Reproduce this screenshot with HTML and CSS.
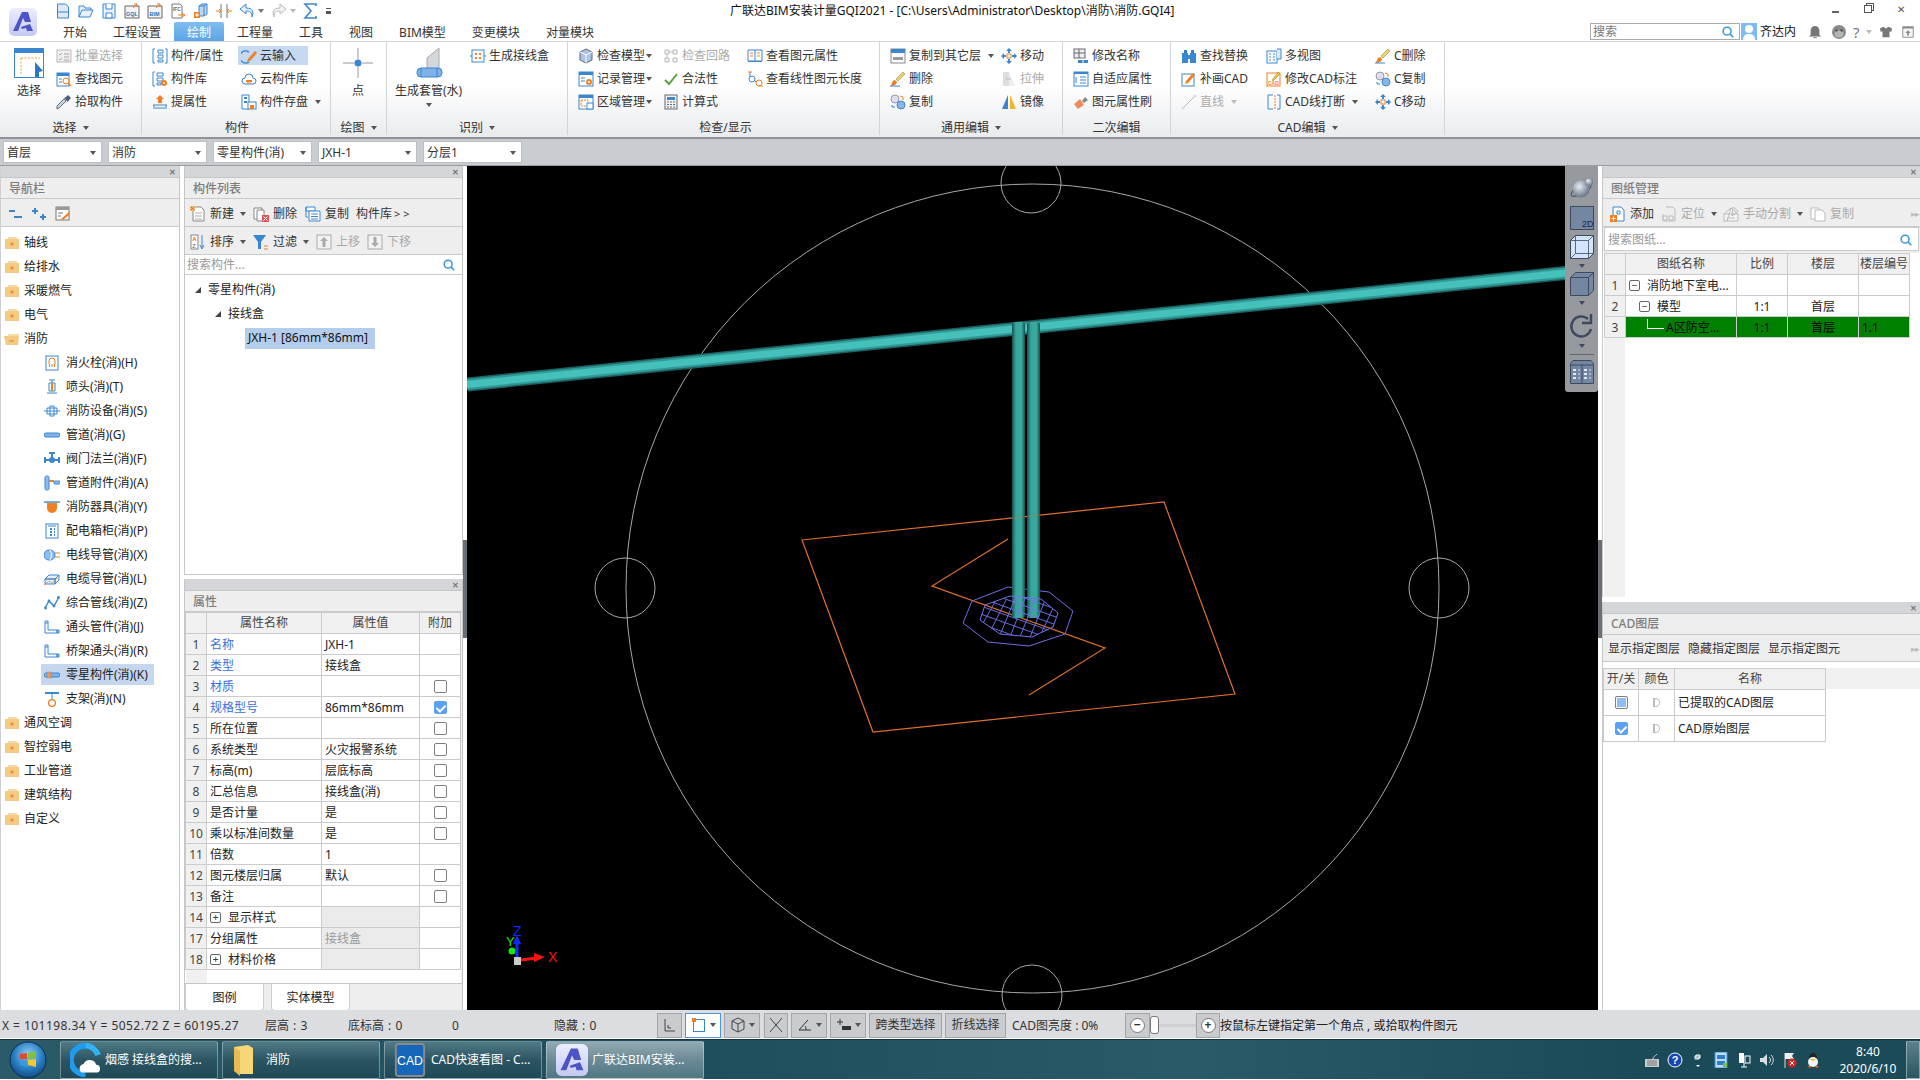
FILE: index.html
```html
<!DOCTYPE html>
<html lang="zh-CN">
<head>
<meta charset="utf-8">
<title>广联达BIM安装计量GQI2021</title>
<link rel="stylesheet" href="styles.css">
</head>
<body>
<svg class="defs" width="0" height="0">
  <defs>
    <linearGradient id="gv" x1="0" x2="1" y1="0" y2="0"><stop offset="0" stop-color="#144f4d"/><stop offset=".3" stop-color="#38a59d"/><stop offset=".72" stop-color="#3aa99f"/><stop offset="1" stop-color="#144f4d"/></linearGradient>
    <linearGradient id="lg" x1="0" x2="0" y1="0" y2="1"><stop offset="0" stop-color="#eceeff"/><stop offset="1" stop-color="#c5c9f2"/></linearGradient>
    <radialGradient id="orb" cx=".5" cy=".35" r=".7"><stop offset="0" stop-color="#8fd0f5"/><stop offset=".55" stop-color="#2a7fc4"/><stop offset="1" stop-color="#0d3f74"/></radialGradient>
    <radialGradient id="sph" cx=".4" cy=".35" r=".7"><stop offset="0" stop-color="#e8edf3"/><stop offset="1" stop-color="#5d6b7c"/></radialGradient>
    <clipPath id="gridclip"><polygon points="1010,596 1041,599 1058,613 1053,627 1032,637 1000,634 980,620 985,605"/></clipPath>

    <symbol id="logo" viewBox="0 0 28 28"><rect width="28" height="28" rx="5" fill="url(#lg)"/><path d="M4 23 13 4h6l3 10h-6l-2-4-5 13zM12 19l9-3 3 7h-6l-1-3-4 1z" fill="#4c54c6"/></symbol>

    <symbol id="q-new" viewBox="0 0 16 16"><path d="M2.5 1h8l3 3v11h-11z" fill="#dbe9f8" stroke="#3a86d0"/><path d="M3 9h10" stroke="#3a86d0"/></symbol>
    <symbol id="q-open" viewBox="0 0 16 16"><path d="M1 14V3h5l1 2h6v2M1 14l3-7h11l-3 7z" fill="#e8f1fb" stroke="#3a86d0"/></symbol>
    <symbol id="q-save" viewBox="0 0 16 16"><path d="M2 1h12v14H2z" fill="#eaf3fc" stroke="#3a86d0"/><path d="M5 1v5h6V1M5 10h6v5H5z" fill="#fff" stroke="#3a86d0"/></symbol>
    <symbol id="q-gql" viewBox="0 0 16 16"><path d="M1 3h14v12H1z" fill="#f4f4f4" stroke="#666"/><path d="M9 5l4-4M13 1h-3M13 1v3" stroke="#f07f22" fill="none"/><text x="2" y="13" font-size="5.4" font-family="Liberation Sans" font-weight="700" fill="#2d6fb5">GQL</text></symbol>
    <symbol id="q-bim" viewBox="0 0 16 16"><path d="M1 3h14v12H1z" fill="#f4f4f4" stroke="#666"/><path d="M9 5l4-4M13 1h-3M13 1v3" stroke="#f07f22" fill="none"/><text x="2.5" y="13" font-size="5.4" font-family="Liberation Sans" font-weight="700" fill="#2d6fb5">BIM</text></symbol>
    <symbol id="q-ifc" viewBox="0 0 16 16"><path d="M2 1h8l2 2v12H2z" fill="#fff" stroke="#777"/><text x="3" y="8" font-size="4.8" font-family="Liberation Sans" font-weight="700" fill="#666">IFC</text><path d="M8 12h6M12 10l3 2-3 2" stroke="#f07f22" fill="none"/></symbol>
    <symbol id="q-box" viewBox="0 0 16 16"><path d="M6 3l3-2h5v10l-3 2H6z" fill="#bcd8f2" stroke="#3a86d0"/><path d="M6 3h5v10M11 3l3-2" stroke="#3a86d0" fill="none"/><rect x="1" y="9" width="6" height="6" fill="#f07f22"/><path d="M4 10v4M2 12h4" stroke="#fff"/></symbol>
    <symbol id="q-split" viewBox="0 0 16 16"><path d="M5 1v14M11 1v14" stroke="#777"/><path d="M0 8h4M3 6l2 2-2 2M16 8h-4M13 6l-2 2 2 2" stroke="#f07f22" fill="none"/></symbol>
    <symbol id="q-undo" viewBox="0 0 16 16"><path d="M7 1 1 6l6 5V8c4 0 6 1 6 6 2-5 1-9-6-9z" fill="#e3effa" stroke="#3a86d0"/></symbol>
    <symbol id="q-redo" viewBox="0 0 16 16"><path d="M9 1l6 5-6 5V8c-4 0-6 1-6 6-2-5-1-9 6-9z" fill="#f3f3f3" stroke="#bbb"/></symbol>
    <symbol id="q-sum" viewBox="0 0 16 16"><path d="M13 3V1H2l6 7-6 7h11v-2" fill="none" stroke="#3a86d0" stroke-width="1.6"/></symbol>

    <symbol id="i-batch" viewBox="0 0 16 16"><rect x="1" y="2" width="14" height="12" fill="#eee" stroke="#bbb"/><path d="M3 6l1 1 2-2M3 11l1 1 2-2M8 6h5M8 9h5M8 12h5" stroke="#aaa" fill="none"/></symbol>
    <symbol id="i-find" viewBox="0 0 16 16"><rect x="1" y="2" width="12" height="13" fill="#fff" stroke="#3a86d0"/><path d="M1 2h12v3H1z" fill="#3a86d0"/><circle cx="10" cy="10" r="3" fill="#fff" stroke="#f07f22"/><path d="M12 12l3 3" stroke="#f07f22" stroke-width="1.5"/><path d="M3 8h3M3 11h3" stroke="#3a86d0"/></symbol>
    <symbol id="i-pick" viewBox="0 0 16 16"><path d="M1 15l2-1 7-7-2-2-7 7z" fill="#d0d8e0" stroke="#5a6a80"/><path d="M8 4l4 4 1-2 2-2-3-3-2 2z" fill="#4a5c74"/></symbol>
    <symbol id="i-comp" viewBox="0 0 16 16"><path d="M3 1H1v14h2M13 1h2v14h-2" fill="none" stroke="#3a86d0"/><path d="M6 2h5v3H6zM6 7h5v3H6zM6 12h5v2H6z" fill="#fff" stroke="#3a86d0"/></symbol>
    <symbol id="i-lib" viewBox="0 0 16 16"><path d="M3 1H1v14h2" fill="none" stroke="#3a86d0"/><path d="M5 2h6v3H5zM5 7h6v3H5zM5 12h4v2H5z" fill="#fff" stroke="#3a86d0"/><circle cx="12" cy="12" r="3" fill="#f07f22"/><circle cx="12" cy="12" r="1" fill="#fff"/></symbol>
    <symbol id="i-ext" viewBox="0 0 16 16"><path d="M8 1l4 4h-2v4H6V5H4z" fill="#f07f22"/><path d="M1 11h14M3 14h10M2 11v4M14 11v4" stroke="#3a86d0"/></symbol>
    <symbol id="i-cloudin" viewBox="0 0 16 16"><path d="M8 4a6 6 0 1 0 0 10" fill="none" stroke="#3a86d0" stroke-width="1.5"/><path d="M14 3 7 11l-1 3 3-1 7-8z" fill="#f07f22"/></symbol>
    <symbol id="i-cloudlib" viewBox="0 0 16 16"><path d="M4 13a3 3 0 0 1 0-6 4 4 0 0 1 8 0 3 3 0 0 1 0 6z" fill="#fff" stroke="#3a86d0"/><path d="M5 9h6v2H5z" fill="#f07f22"/><path d="M6 12h4" stroke="#f07f22"/></symbol>
    <symbol id="i-store" viewBox="0 0 16 16"><path d="M1 1h7v14H1z" fill="#fff" stroke="#3a86d0"/><path d="M3 3h3v2H3zM3 7h3v2H3z" fill="#3a86d0"/><rect x="7" y="8" width="8" height="7" fill="#fff" stroke="#3a86d0"/><rect x="9" y="11" width="4" height="4" fill="#f07f22"/></symbol>
    <symbol id="i-genbox" viewBox="0 0 16 16"><rect x="2" y="2" width="12" height="12" fill="#fff" stroke="#3a86d0"/><path d="M0 8h2M14 8h2" stroke="#3a86d0"/><path d="M5 5h2v2H5zM9 5h2v2H9zM5 9h2v2H5zM9 9h2v2H9z" fill="#f07f22"/></symbol>
    <symbol id="i-model" viewBox="0 0 16 16"><path d="M8 1l6 3v8l-6 3-6-3V4z" fill="#a9c6e6" stroke="#667"/><path d="M2 4l6 3 6-3M8 7v8" stroke="#fff" fill="none"/></symbol>
    <symbol id="i-record" viewBox="0 0 16 16"><rect x="1" y="1" width="14" height="14" fill="#fff" stroke="#3a86d0"/><path d="M1 1h14v3H1z" fill="#3a86d0"/><path d="M3 7h4M3 10h4" stroke="#3a86d0"/><circle cx="11" cy="11" r="3" fill="#f07f22"/><circle cx="11" cy="11" r="1" fill="#fff"/></symbol>
    <symbol id="i-area" viewBox="0 0 16 16"><rect x="1" y="1" width="14" height="14" fill="#fff" stroke="#3a86d0"/><path d="M1 1h14v3H1z" fill="#3a86d0"/><rect x="3" y="6" width="7" height="6" fill="none" stroke="#f07f22" stroke-dasharray="2 1"/><path d="M9 9h6v6H9z" fill="#fff" stroke="#3a86d0"/></symbol>
    <symbol id="i-loop" viewBox="0 0 16 16"><path d="M2 2h4v4H2zM10 2h4v4h-4zM2 10h4v4H2zM10 10h4v4h-4zM6 4h4M4 6v4" fill="#f2f2f2" stroke="#bbb"/></symbol>
    <symbol id="i-legal" viewBox="0 0 16 16"><path d="M2 9l4 4 8-10" fill="none" stroke="#5aa13c" stroke-width="2"/></symbol>
    <symbol id="i-calc" viewBox="0 0 16 16"><rect x="2" y="1" width="12" height="14" fill="#f4f4f4" stroke="#667"/><path d="M4 3h8v3H4z" fill="#3a86d0"/><path d="M4 8h2M7 8h2M10 8h2M4 10.5h2M7 10.5h2M10 10.5h2M4 13h2M7 13h2M10 13h2" stroke="#667"/></symbol>
    <symbol id="i-attr" viewBox="0 0 16 16"><path d="M1 2h14v11H1z" fill="#fff" stroke="#3a86d0"/><path d="M8 2v11" stroke="#3a86d0"/><path d="M3 5h3M3 8h3M10 5h3M10 8h3" stroke="#f07f22"/><path d="M1 13h14v1H1z" fill="#3a86d0"/></symbol>
    <symbol id="i-len" viewBox="0 0 16 16"><path d="M3 1v5M3 6l9 7" stroke="#3a86d0"/><circle cx="5" cy="8" r="3" fill="#fff" stroke="#3a86d0"/><circle cx="12" cy="12" r="3" fill="#fff" stroke="#f07f22"/><path d="M1 1h4M12 15h4" stroke="#f07f22"/></symbol>
    <symbol id="i-copyto" viewBox="0 0 16 16"><rect x="1" y="1" width="14" height="14" fill="#fff" stroke="#888"/><path d="M1 1h14v4H1z" fill="#3a86d0"/><path d="M3 9h10v3H3z" fill="#999"/></symbol>
    <symbol id="i-move" viewBox="0 0 16 16"><path d="M8 0l3 3H9v2H7V3H5zM8 16l-3-3h2v-2h2v2h2zM0 8l3-3v2h2v2H3v2zM16 8l-3 3V9h-2V7h2V5z" fill="#3a86d0"/><rect x="6" y="6" width="4" height="4" fill="#fff" stroke="#f07f22"/></symbol>
    <symbol id="i-del" viewBox="0 0 16 16"><path d="M1 15c1-4 2-6 4-6l2 2c0 2-3 4-6 4z" fill="#f07f22"/><path d="M6 8l7-7 2 2-7 7z" fill="#f0d070" stroke="#a08a40" stroke-width=".6"/><path d="M0 15h10" stroke="#3a86d0"/></symbol>
    <symbol id="i-stretch" viewBox="0 0 16 16"><path d="M2 1h6v14H2z" fill="#ddd"/><path d="M8 1l6 14H8z" fill="#eee"/><path d="M5 8h5" stroke="#bbb"/></symbol>
    <symbol id="i-copy" viewBox="0 0 16 16"><circle cx="5" cy="5" r="4" fill="#dde" stroke="#99a"/><circle cx="11" cy="11" r="4" fill="#8ab6e6" stroke="#3a86d0"/><path d="M10 2l3 1v3" fill="none" stroke="#f07f22"/><path d="M2 11v2h3" fill="none" stroke="#3a86d0"/></symbol>
    <symbol id="i-mirror" viewBox="0 0 16 16"><path d="M7 1v14H1z" fill="#3a86d0"/><path d="M9 1v14h6z" fill="#f5b327"/></symbol>
    <symbol id="i-rename" viewBox="0 0 16 16"><rect x="1" y="1" width="11" height="9" fill="#eee" stroke="#667"/><path d="M1 5h11M6 1v9" stroke="#667"/><path d="M5 12h10v3H5z" fill="#3a86d0"/><path d="M10 10v5" stroke="#fff"/></symbol>
    <symbol id="i-adapt" viewBox="0 0 16 16"><rect x="1" y="1" width="14" height="14" fill="#fff" stroke="#3a86d0"/><path d="M1 1h14v2H1z" fill="#3a86d0"/><path d="M7 6h6M7 9h6M7 12h6M3 6v6" stroke="#3a86d0"/></symbol>
    <symbol id="i-brush" viewBox="0 0 16 16"><path d="M9 7l3-4 3 3-4 3z" fill="#888"/><path d="M1 10l6-5 4 6-6 4z" fill="#f08a5a"/></symbol>
    <symbol id="i-replace" viewBox="0 0 16 16"><path d="M3 2h3v3H3zM10 2h3v3h-3z" fill="#2f7cc9"/><path d="M1 5h6v10H1zM9 5h6v10H9z" fill="#3a86d0"/><path d="M7 7h2v4H7z" fill="#3a86d0"/></symbol>
    <symbol id="i-patch" viewBox="0 0 16 16"><rect x="1" y="3" width="12" height="12" fill="#fff" stroke="#3a86d0"/><path d="M5 10l7-8 2 2-7 8-3 1z" fill="#f07f22"/></symbol>
    <symbol id="i-line" viewBox="0 0 16 16"><path d="M2 14 14 2" stroke="#bbb"/><circle cx="2" cy="14" r="1.5" fill="#ddd"/><circle cx="14" cy="2" r="1.5" fill="#ddd"/></symbol>
    <symbol id="i-multi" viewBox="0 0 16 16"><rect x="1" y="3" width="10" height="12" fill="#fff" stroke="#3a86d0"/><path d="M11 1h4v10h-4" fill="#dbe9f8" stroke="#3a86d0"/><path d="M3 6h2M7 6h2M3 9h2M7 9h2M3 12h2M7 12h2" stroke="#3a86d0"/></symbol>
    <symbol id="i-modcad" viewBox="0 0 16 16"><rect x="1" y="2" width="13" height="13" fill="#fff" stroke="#f07f22"/><path d="M6 9l6-8 2 2-7 7z" fill="#f0c040" stroke="#a08030" stroke-width=".5"/><text x="2" y="14" font-size="5" font-family="Liberation Sans" font-weight="700" fill="#f07f22">CAD</text></symbol>
    <symbol id="i-break" viewBox="0 0 16 16"><path d="M2 1h5M2 15h5M2 1v14" fill="none" stroke="#3a86d0"/><path d="M9 1v14" stroke="#f07f22" stroke-dasharray="2 1"/><path d="M14 1v14M11 1h3M11 15h3" stroke="#3a86d0" fill="none"/></symbol>

    <symbol id="n-minus" viewBox="0 0 16 16"><path d="M2 5h6M7 11h8" stroke="#3a86d0" stroke-width="2"/></symbol>
    <symbol id="n-plus" viewBox="0 0 16 16"><path d="M1 5h6M4 2v6M9 11h6M12 8v6" stroke="#3a86d0" stroke-width="2"/></symbol>
    <symbol id="n-edit" viewBox="0 0 16 16"><rect x="1" y="1" width="13" height="13" fill="#fff" stroke="#777"/><path d="M1 1h13v3H1z" fill="#999"/><path d="M3 7h5M3 10h3" stroke="#777"/><path d="M6 13l8-7 1 2-7 6z" fill="#f07f22"/></symbol>
    <symbol id="f-plus" viewBox="0 0 16 16"><path d="M1 4h14v10H1z" fill="#f3c983"/><path d="M4 2h9v2H4z" fill="#f7dca8"/><path d="M6 9h4M8 7v4" stroke="#d38e2c"/></symbol>
    <symbol id="f-open" viewBox="0 0 16 16"><path d="M4 3h11v3H4z" fill="#f7dca8"/><path d="M0 5h15l-1 9H2z" fill="#f3c983"/><path d="M5 10h5" stroke="#d38e2c"/></symbol>
    <symbol id="t-hyd" viewBox="0 0 16 16"><rect x="2" y="1" width="12" height="14" fill="#fff" stroke="#3a86d0"/><path d="M5 9V6a3 3 0 0 1 6 0v3" fill="none" stroke="#f07f22"/><path d="M5 9h1v3H5zM7.5 9h1v3h-1zM10 9h1v3h-1z" fill="#f07f22"/></symbol>
    <symbol id="t-spr" viewBox="0 0 16 16"><path d="M5 1h6M8 1v3" stroke="#3a86d0"/><path d="M5 4h6v8H5z" fill="#fff" stroke="#3a86d0"/><path d="M7 4h2v8H7z" fill="#f07f22"/><path d="M3 14h10" stroke="#3a86d0"/></symbol>
    <symbol id="t-dev" viewBox="0 0 16 16"><path d="M0 8h16M3 5h10v6H3zM6 3h4v10H6z" fill="none" stroke="#3a86d0"/></symbol>
    <symbol id="t-pipe" viewBox="0 0 16 16"><rect x="0" y="6" width="16" height="4" rx="2" fill="#7fb2e8" stroke="#3a86d0"/></symbol>
    <symbol id="t-valve" viewBox="0 0 16 16"><path d="M0 6h2v6H0zM14 6h2v6h-2z" fill="#3a86d0"/><path d="M2 9h12" stroke="#3a86d0" stroke-width="2"/><circle cx="8" cy="9" r="3" fill="#3a86d0"/><path d="M8 3v3M5 2h6" stroke="#3a86d0" stroke-width="2"/></symbol>
    <symbol id="t-att" viewBox="0 0 16 16"><rect x="1" y="1" width="4" height="14" rx="1.5" fill="#8dbcef" stroke="#3a86d0"/><path d="M5 6h5" stroke="#f07f22" stroke-width="2"/><rect x="10" y="6" width="6" height="3" rx="1" fill="#8dbcef" stroke="#3a86d0"/></symbol>
    <symbol id="t-tool" viewBox="0 0 16 16"><path d="M0 3h16" stroke="#3a86d0" stroke-width="1.4"/><path d="M3 4h10v5a5 5 0 0 1-10 0z" fill="#f07f22"/></symbol>
    <symbol id="t-cab" viewBox="0 0 16 16"><rect x="2" y="1" width="12" height="14" fill="#fff" stroke="#3a86d0"/><path d="M4 3h8" stroke="#3a86d0"/><path d="M6 5h2v2H6zM10 5h1v2h-1zM6 8h2v2H6zM10 8h1v2h-1zM6 11h2v2H6zM10 11h1v2h-1z" fill="#3a86d0"/></symbol>
    <symbol id="t-wire" viewBox="0 0 16 16"><rect x="0" y="3" width="11" height="10" rx="5" fill="#8dbcef" stroke="#3a86d0"/><path d="M6 3c2 3 2 7 0 10" fill="none" stroke="#fff"/><path d="M11 6h5M11 10h5" stroke="#f07f22"/></symbol>
    <symbol id="t-cable" viewBox="0 0 16 16"><path d="M1 8l4-4h10l-4 4zM1 8h10v5H1zM11 8l4-4v5l-4 4z" fill="#e4f0fc" stroke="#3a86d0"/><path d="M0 14l5-4 3 2 5-5" fill="none" stroke="#f07f22" stroke-dasharray="2 1"/></symbol>
    <symbol id="t-poly" viewBox="0 0 16 16"><path d="M1 13l4-7 5 5 5-9" fill="none" stroke="#3a86d0" stroke-width="1.4"/><circle cx="1.5" cy="13" r="1.4" fill="#3a86d0"/><circle cx="5" cy="6" r="1.4" fill="#3a86d0"/><circle cx="10" cy="11" r="1.4" fill="#3a86d0"/><circle cx="14.5" cy="2.5" r="1.4" fill="#3a86d0"/></symbol>
    <symbol id="t-elb" viewBox="0 0 16 16"><path d="M1 2h3v9h9v3H1z" fill="#fff" stroke="#3a86d0"/><path d="M1 4h3" stroke="#3a86d0"/><path d="M13 11v3h2v-3z" fill="#8dbcef" stroke="#3a86d0"/></symbol>
    <symbol id="t-misc" viewBox="0 0 16 16"><rect x="0" y="6" width="16" height="4" rx="2" fill="#7fb2e8" stroke="#3a86d0"/><rect x="3" y="5" width="4" height="6" fill="#f0975a" stroke="#888" stroke-width=".5"/></symbol>
    <symbol id="t-brk" viewBox="0 0 16 16"><path d="M1 2h14" stroke="#3a86d0" stroke-width="2"/><path d="M8 2v7" stroke="#3a86d0"/><circle cx="8" cy="12" r="3.4" fill="none" stroke="#f07f22" stroke-width="1.3"/></symbol>

    <symbol id="m-new" viewBox="0 0 16 16"><path d="M3 1h8l3 3v11H3z" fill="#fff" stroke="#888"/><path d="M5 7h7M5 10h7M5 13h7" stroke="#aaa"/><path d="M0 0h5v5H0z" fill="#f5b76c"/><path d="M1 1l3 3M4 1 1 4" stroke="#e8641c"/></symbol>
    <symbol id="m-del" viewBox="0 0 16 16"><path d="M1 2h8v11H1z" fill="#fff" stroke="#888"/><path d="M4 4h7v11H4z" fill="#fff" stroke="#888"/><rect x="9" y="9" width="7" height="7" fill="#e05555"/><path d="M10.5 10.5l4 4M14.5 10.5l-4 4" stroke="#fff"/></symbol>
    <symbol id="m-copy" viewBox="0 0 16 16"><path d="M1 1h9v4H1zM1 1v10h2" fill="#fff" stroke="#3a86d0"/><path d="M4 5h11v10H4z" fill="#fff" stroke="#3a86d0"/><path d="M6 8h7M6 10.5h7M6 13h7" stroke="#3a86d0"/></symbol>
    <symbol id="m-sort" viewBox="0 0 16 16"><rect x="1" y="1" width="7" height="14" fill="#fff" stroke="#888"/><text x="2.2" y="7" font-size="6" font-family="Liberation Sans" font-weight="700" fill="#e8641c">A</text><text x="2.2" y="13.5" font-size="6" font-family="Liberation Sans" fill="#666">Z</text><path d="M12 1v13M10 11l2 4 2-4" stroke="#3a86d0" fill="none"/></symbol>
    <symbol id="m-filter" viewBox="0 0 16 16"><path d="M0 1h13L8 8v7H5V8z" fill="#3a86d0"/><path d="M11 12h4M11 15h4" stroke="#f07f22"/></symbol>
    <symbol id="m-up" viewBox="0 0 16 16"><rect x="1" y="1" width="14" height="14" fill="#f2f2f2" stroke="#aaa"/><path d="M8 3l4 4H9.5v6h-3V7H4z" fill="#aaa"/></symbol>
    <symbol id="m-down" viewBox="0 0 16 16"><rect x="1" y="1" width="14" height="14" fill="#f2f2f2" stroke="#aaa"/><path d="M8 13 4 9h2.5V3h3v6H12z" fill="#aaa"/></symbol>
    <symbol id="m-search" viewBox="0 0 16 16"><circle cx="7" cy="7" r="4.5" fill="none" stroke="#3a9ad9" stroke-width="1.8"/><path d="M10 10l4 4" stroke="#3a9ad9" stroke-width="2"/></symbol>
    <symbol id="r-add" viewBox="0 0 16 16"><path d="M3 1h8l3 3v11H3z" fill="#fff" stroke="#3a86d0"/><path d="M7 5h3v3H7z" fill="none" stroke="#3a86d0"/><rect x="0" y="9" width="7" height="7" fill="#f07f22"/><path d="M3.5 10.5v4M1.5 12.5h4" stroke="#fff"/></symbol>
    <symbol id="r-pos" viewBox="0 0 16 16"><path d="M5 1h7l2 2v12H2V8" fill="none" stroke="#bbb"/><path d="M2 10h4v4H2zM8 10h4v4H8z" fill="#eee" stroke="#bbb"/></symbol>
    <symbol id="r-split" viewBox="0 0 16 16"><path d="M1 8l7-6 7 6v7H1z" fill="#f4f4f4" stroke="#bbb"/><path d="M1 8h14M4 12h8M8 2 4 15" stroke="#bbb"/><path d="M10 1l5 4-6 5z" fill="none" stroke="#bbb"/></symbol>
    <symbol id="r-copy" viewBox="0 0 16 16"><path d="M1 2h8v11H1z" fill="#fff" stroke="#bbb"/><path d="M5 4h7l3 3v8H5z" fill="#fff" stroke="#bbb"/></symbol>

    <symbol id="v-2d" viewBox="0 0 24 24"><rect x=".5" y=".5" width="23" height="23" fill="#7387a3" stroke="#3d4a5e"/><text x="12" y="21" font-size="9" font-family="Liberation Sans" fill="#1e2a3a">2D</text></symbol>
    <symbol id="v-wire" viewBox="0 0 24 24"><path d="M5.5 .5h18v18l-5 5H.5v-18z" fill="#d2e4fa" stroke="#3d4a5e"/><path d="M.5 5.5h18v18M18.5 5.5l5-5M.5 23.5l5-5h18M5.5.5v18" fill="none" stroke="#3d4a5e" stroke-width=".8"/></symbol>
    <symbol id="v-cube" viewBox="0 0 24 24"><path d="M5.5 .5h18v18l-5 5H.5v-18z" fill="#7387a3" stroke="#3d4a5e"/><path d="M.5 5.5h18v18M18.5 5.5l5-5" fill="none" stroke="#3d4a5e"/></symbol>
    <symbol id="v-rot" viewBox="0 0 26 26"><path d="M22 16a10 10 0 1 1-3-10" fill="none" stroke="#3d4a5e" stroke-width="2.4"/><path d="M22 1v9h-9" fill="none" stroke="#3d4a5e" stroke-width="2.4"/></symbol>
    <symbol id="v-tbl" viewBox="0 0 24 24"><path d="M3 .5h18l2.5 3v20H.5v-20z" fill="#7387a3" stroke="#3d4a5e"/><path d="M.5 5h23M12 5v18" stroke="#3d4a5e"/><path d="M3 9h3v2H3zM3 13h3v2H3zM3 17h3v2H3zM14 9h3v2h-3zM14 13h3v2h-3zM14 17h3v2h-3z" fill="#e4e8ee"/><path d="M8 10h2M8 14h2M8 18h2M19 10h2M19 14h2M19 18h2" stroke="#e4e8ee"/></symbol>
    <symbol id="v-sph" viewBox="0 0 24 24"><ellipse cx="11" cy="14" rx="11" ry="4" fill="none" stroke="#3d4a5e" transform="rotate(-28 11 14)"/><circle cx="11" cy="13" r="8.5" fill="url(#sph)"/><circle cx="19" cy="6" r="4" fill="url(#sph)" stroke="#7a8896" stroke-width=".5"/></symbol>
  </defs>
</svg>

<div class="app">
  <header class="top">
    <div class="logo-col">
      <svg class="logo"><use href="#logo"/></svg>
    </div>
    <div class="top-main">
      <div class="row-qat">
        <div class="qat">
          <svg class="ic"><use href="#q-new"/></svg>
          <svg class="ic"><use href="#q-open"/></svg>
          <svg class="ic"><use href="#q-save"/></svg>
          <svg class="ic"><use href="#q-gql"/></svg>
          <svg class="ic"><use href="#q-bim"/></svg>
          <svg class="ic"><use href="#q-ifc"/></svg>
          <svg class="ic"><use href="#q-box"/></svg>
          <svg class="ic"><use href="#q-split"/></svg>
          <svg class="ic"><use href="#q-undo"/></svg><i class="car car-g"></i>
          <svg class="ic"><use href="#q-redo"/></svg><i class="car car-g car-l"></i>
          <svg class="ic"><use href="#q-sum"/></svg><span class="qmore"></span>
        </div>
        <div class="wintitle">广联达BIM安装计量GQI2021 - [C:\Users\Administrator\Desktop\消防\消防.GQI4]</div>
        <div class="winbtns">
          <span class="wmin"></span><span class="wres"></span><span class="wclose">✕</span>
        </div>
      </div>
      <div class="row-tabs">
        <nav class="tabs">
          <span class="tab">开始</span><span class="tab">工程设置</span><span class="tab on">绘制</span><span class="tab">工程量</span><span class="tab">工具</span><span class="tab">视图</span><span class="tab">BIM模型</span><span class="tab">变更模块</span><span class="tab">对量模块</span>
        </nav>
        <div class="acct">
          <div class="topsearch"><span>搜索</span><svg class="ic14"><use href="#m-search"/></svg></div>
          <svg class="avatar" viewBox="0 0 16 17"><rect width="16" height="17" fill="#7fbcf5"/><circle cx="8" cy="6" r="4" fill="#fff"/><path d="M2 17c0-5 3-6 6-6s6 1 6 6z" fill="#fff"/></svg>
          <span class="aname">齐达内</span>
          <svg class="tool16 bell" viewBox="0 0 16 16"><path d="M8 1a5 5 0 0 1 5 5v5l2 2H1l2-2V6a5 5 0 0 1 5-5z" fill="#777"/><path d="M6 14h4v1H6z" fill="#777"/></svg>
          <svg class="tool16 monk" viewBox="0 0 16 16"><circle cx="8" cy="8" r="7" fill="#8a8a8a"/><ellipse cx="8" cy="10" rx="4.5" ry="3.5" fill="#b5b5b5"/><circle cx="5.5" cy="6.5" r="1" fill="#333"/><circle cx="10.5" cy="6.5" r="1" fill="#333"/></svg>
          <span class="qmark">?</span><i class="car car-l"></i>
          <svg class="tool16 shirt" viewBox="0 0 16 16"><path d="M5 2 1 4l1 4 2-1v7h8V7l2 1 1-4-4-2-3 2z" fill="#777"/></svg>
          <svg class="tool16 upl" viewBox="0 0 16 16"><path d="M2 2h12v12H2z" fill="#f4f4f4" stroke="#888"/><path d="M2 2h12v2H2z" fill="#888"/><path d="M8 6l3 3H9v3H7V9H5z" fill="#888"/></svg>
        </div>
      </div>
    </div>
  </header>

  <section class="ribbon">
    <div class="grp g-sel">
      <div class="gbody">
        <div class="large">
          <svg class="lg" viewBox="0 0 30 30"><rect x=".5" y=".5" width="29" height="29" fill="#fff" stroke="#3a86d0"/><path d="M0 0h30v5H0z" fill="#3a86d0"/><path d="M7 10h19M7 10v16" fill="none" stroke="#f0a020" stroke-dasharray="2 1.5"/><path d="M21 14l8 9-4 1v5h-4z" fill="#2f76c0"/></svg>
          <span>选择</span>
        </div>
        <div class="col">
          <div class="ri dis"><svg class="ic"><use href="#i-batch"/></svg>批量选择</div>
          <div class="ri"><svg class="ic"><use href="#i-find"/></svg>查找图元</div>
          <div class="ri"><svg class="ic"><use href="#i-pick"/></svg>拾取构件</div>
        </div>
      </div>
      <div class="gfoot">选择<i class="car"></i></div>
    </div>
    <div class="grp g-comp">
      <div class="gbody">
        <div class="col c89">
          <div class="ri"><svg class="ic"><use href="#i-comp"/></svg>构件/属性</div>
          <div class="ri"><svg class="ic"><use href="#i-lib"/></svg>构件库</div>
          <div class="ri"><svg class="ic"><use href="#i-ext"/></svg>提属性</div>
        </div>
        <div class="col">
          <div class="ri hot"><svg class="ic"><use href="#i-cloudin"/></svg>云输入</div>
          <div class="ri"><svg class="ic"><use href="#i-cloudlib"/></svg>云构件库</div>
          <div class="ri"><svg class="ic"><use href="#i-store"/></svg>构件存盘<i class="car"></i></div>
        </div>
      </div>
      <div class="gfoot">构件</div>
    </div>
    <div class="grp g-draw">
      <div class="gbody">
        <div class="large fill">
          <svg class="lg" viewBox="0 0 30 30"><path d="M15 0v11M15 19v11M0 15h11M19 15h11" stroke="#8f9aa6"/><circle cx="15" cy="15" r="3.5" fill="#3a86d0"/></svg>
          <span>点</span>
        </div>
      </div>
      <div class="gfoot">绘图<i class="car"></i></div>
    </div>
    <div class="grp g-id">
      <div class="gbody">
        <div class="large w83">
          <svg class="lg" viewBox="0 0 30 30"><path d="M13 26V10L25 0v26z" fill="#d4d7db" stroke="#aaa"/><rect x="3" y="20" width="25" height="9" rx="4" fill="#7fb2e8" stroke="#3a86d0"/><path d="M7 20v9M23 20v9" stroke="#3a86d0"/></svg>
          <span>生成套管(水)</span>
          <i class="car sub"></i>
        </div>
        <div class="col">
          <div class="ri"><svg class="ic"><use href="#i-genbox"/></svg>生成接线盒</div>
        </div>
      </div>
      <div class="gfoot">识别<i class="car"></i></div>
    </div>
    <div class="grp g-chk">
      <div class="gbody">
        <div class="col c85">
          <div class="ri"><svg class="ic"><use href="#i-model"/></svg>检查模型<i class="car c1"></i></div>
          <div class="ri"><svg class="ic"><use href="#i-record"/></svg>记录管理<i class="car c1"></i></div>
          <div class="ri"><svg class="ic"><use href="#i-area"/></svg>区域管理<i class="car c1"></i></div>
        </div>
        <div class="col c84">
          <div class="ri dis"><svg class="ic"><use href="#i-loop"/></svg>检查回路</div>
          <div class="ri"><svg class="ic"><use href="#i-legal"/></svg>合法性</div>
          <div class="ri"><svg class="ic"><use href="#i-calc"/></svg>计算式</div>
        </div>
        <div class="col">
          <div class="ri"><svg class="ic"><use href="#i-attr"/></svg>查看图元属性</div>
          <div class="ri"><svg class="ic"><use href="#i-len"/></svg>查看线性图元长度</div>
        </div>
      </div>
      <div class="gfoot">检查/显示</div>
    </div>
    <div class="grp g-gen">
      <div class="gbody">
        <div class="col c111">
          <div class="ri"><svg class="ic"><use href="#i-copyto"/></svg>复制到其它层<i class="car"></i></div>
          <div class="ri"><svg class="ic"><use href="#i-del"/></svg>删除</div>
          <div class="ri"><svg class="ic"><use href="#i-copy"/></svg>复制</div>
        </div>
        <div class="col">
          <div class="ri"><svg class="ic"><use href="#i-move"/></svg>移动</div>
          <div class="ri dis"><svg class="ic"><use href="#i-stretch"/></svg>拉伸</div>
          <div class="ri"><svg class="ic"><use href="#i-mirror"/></svg>镜像</div>
        </div>
      </div>
      <div class="gfoot">通用编辑<i class="car"></i></div>
    </div>
    <div class="grp g-sec">
      <div class="gbody">
        <div class="col">
          <div class="ri"><svg class="ic"><use href="#i-rename"/></svg>修改名称</div>
          <div class="ri"><svg class="ic"><use href="#i-adapt"/></svg>自适应属性</div>
          <div class="ri"><svg class="ic"><use href="#i-brush"/></svg>图元属性刷</div>
        </div>
      </div>
      <div class="gfoot">二次编辑</div>
    </div>
    <div class="grp g-cad">
      <div class="gbody">
        <div class="col c85">
          <div class="ri"><svg class="ic"><use href="#i-replace"/></svg>查找替换</div>
          <div class="ri"><svg class="ic"><use href="#i-patch"/></svg>补画CAD</div>
          <div class="ri dis"><svg class="ic"><use href="#i-line"/></svg>直线<i class="car car-l"></i></div>
        </div>
        <div class="col c109">
          <div class="ri"><svg class="ic"><use href="#i-multi"/></svg>多视图</div>
          <div class="ri"><svg class="ic"><use href="#i-modcad"/></svg>修改CAD标注</div>
          <div class="ri"><svg class="ic"><use href="#i-break"/></svg>CAD线打断<i class="car"></i></div>
        </div>
        <div class="col">
          <div class="ri"><svg class="ic"><use href="#i-del"/></svg>C删除</div>
          <div class="ri"><svg class="ic"><use href="#i-copy"/></svg>C复制</div>
          <div class="ri"><svg class="ic"><use href="#i-move"/></svg>C移动</div>
        </div>
      </div>
      <div class="gfoot">CAD编辑<i class="car"></i></div>
    </div>
  </section>

  <section class="combos">
    <div class="combo">首层<i class="car"></i></div>
    <div class="combo">消防<i class="car"></i></div>
    <div class="combo">零星构件(消)<i class="car"></i></div>
    <div class="combo">JXH-1<i class="car"></i></div>
    <div class="combo">分层1<i class="car"></i></div>
  </section>

  <main class="main">
    <aside class="panel nav">
      <div class="strip"><span class="x">✕</span></div>
      <div class="ptitle">导航栏</div>
      <div class="ptools navtools">
        <svg class="ic"><use href="#n-minus"/></svg>
        <svg class="ic"><use href="#n-plus"/></svg>
        <svg class="ic"><use href="#n-edit"/></svg>
      </div>
      <div class="navtree">
        <div class="nrow"><svg class="ic"><use href="#f-plus"/></svg>轴线</div>
        <div class="nrow"><svg class="ic"><use href="#f-plus"/></svg>给排水</div>
        <div class="nrow"><svg class="ic"><use href="#f-plus"/></svg>采暖燃气</div>
        <div class="nrow"><svg class="ic"><use href="#f-plus"/></svg>电气</div>
        <div class="nrow"><svg class="ic"><use href="#f-open"/></svg>消防</div>
        <div class="nrow ch"><svg class="ic"><use href="#t-hyd"/></svg>消火栓(消)(H)</div>
        <div class="nrow ch"><svg class="ic"><use href="#t-spr"/></svg>喷头(消)(T)</div>
        <div class="nrow ch"><svg class="ic"><use href="#t-dev"/></svg>消防设备(消)(S)</div>
        <div class="nrow ch"><svg class="ic"><use href="#t-pipe"/></svg>管道(消)(G)</div>
        <div class="nrow ch"><svg class="ic"><use href="#t-valve"/></svg>阀门法兰(消)(F)</div>
        <div class="nrow ch"><svg class="ic"><use href="#t-att"/></svg>管道附件(消)(A)</div>
        <div class="nrow ch"><svg class="ic"><use href="#t-tool"/></svg>消防器具(消)(Y)</div>
        <div class="nrow ch"><svg class="ic"><use href="#t-cab"/></svg>配电箱柜(消)(P)</div>
        <div class="nrow ch"><svg class="ic"><use href="#t-wire"/></svg>电线导管(消)(X)</div>
        <div class="nrow ch"><svg class="ic"><use href="#t-cable"/></svg>电缆导管(消)(L)</div>
        <div class="nrow ch"><svg class="ic"><use href="#t-poly"/></svg>综合管线(消)(Z)</div>
        <div class="nrow ch"><svg class="ic"><use href="#t-elb"/></svg>通头管件(消)(J)</div>
        <div class="nrow ch"><svg class="ic"><use href="#t-elb"/></svg>桥架通头(消)(R)</div>
        <div class="nrow ch sel"><svg class="ic"><use href="#t-misc"/></svg>零星构件(消)(K)</div>
        <div class="nrow ch"><svg class="ic"><use href="#t-brk"/></svg>支架(消)(N)</div>
        <div class="nrow"><svg class="ic"><use href="#f-plus"/></svg>通风空调</div>
        <div class="nrow"><svg class="ic"><use href="#f-plus"/></svg>智控弱电</div>
        <div class="nrow"><svg class="ic"><use href="#f-plus"/></svg>工业管道</div>
        <div class="nrow"><svg class="ic"><use href="#f-plus"/></svg>建筑结构</div>
        <div class="nrow"><svg class="ic"><use href="#f-plus"/></svg>自定义</div>
      </div>
    </aside>

    <div class="midcol">
      <section class="panel clist">
        <div class="strip"><span class="x">✕</span></div>
        <div class="ptitle">构件列表</div>
        <div class="ptools mt">
          <span class="ti t1"><svg class="ic"><use href="#m-new"/></svg>新建<i class="car"></i></span>
          <span class="ti t2"><svg class="ic"><use href="#m-del"/></svg>删除</span>
          <span class="ti t3"><svg class="ic"><use href="#m-copy"/></svg>复制</span>
          <span class="ti">构件库<small class="gtgt">&gt; &gt;</small></span>
        </div>
        <div class="ptools mt">
          <span class="ti t1"><svg class="ic"><use href="#m-sort"/></svg>排序<i class="car"></i></span>
          <span class="ti t4"><svg class="ic"><use href="#m-filter"/></svg>过滤<i class="car"></i></span>
          <span class="ti t3 dis"><svg class="ic"><use href="#m-up"/></svg>上移</span>
          <span class="ti dis"><svg class="ic"><use href="#m-down"/></svg>下移</span>
        </div>
        <div class="psearch ms"><span>搜索构件...</span><svg class="ic14"><use href="#m-search"/></svg></div>
        <div class="ctree">
          <div class="crow l1"><i class="tri"></i>零星构件(消)</div>
          <div class="crow l2"><i class="tri"></i>接线盒</div>
          <div class="crow l3"><span class="csel">JXH-1 [86mm*86mm]</span></div>
        </div>
      </section>
      <section class="panel props">
        <div class="strip"><span class="x">✕</span></div>
        <div class="ptitle">属性</div>
        <table class="ptable">
          <colgroup><col class="w22"><col class="w115"><col class="w98"><col class="w41"></colgroup>
          <thead><tr><th></th><th>属性名称</th><th>属性值</th><th>附加</th></tr></thead>
          <tbody>
            <tr><td class="idx">1</td><td class="blu">名称</td><td>JXH-1</td><td></td></tr>
            <tr><td class="idx">2</td><td class="blu">类型</td><td>接线盒</td><td></td></tr>
            <tr><td class="idx">3</td><td class="blu">材质</td><td></td><td class="cb"><i class="chk"></i></td></tr>
            <tr><td class="idx">4</td><td class="blu">规格型号</td><td>86mm*86mm</td><td class="cb"><i class="chk on"></i></td></tr>
            <tr><td class="idx">5</td><td>所在位置</td><td></td><td class="cb"><i class="chk"></i></td></tr>
            <tr><td class="idx">6</td><td>系统类型</td><td>火灾报警系统</td><td class="cb"><i class="chk"></i></td></tr>
            <tr><td class="idx">7</td><td>标高(m)</td><td>层底标高</td><td class="cb"><i class="chk"></i></td></tr>
            <tr><td class="idx">8</td><td>汇总信息</td><td>接线盒(消)</td><td class="cb"><i class="chk"></i></td></tr>
            <tr><td class="idx">9</td><td>是否计量</td><td>是</td><td class="cb"><i class="chk"></i></td></tr>
            <tr><td class="idx">10</td><td>乘以标准间数量</td><td>是</td><td class="cb"><i class="chk"></i></td></tr>
            <tr><td class="idx">11</td><td>倍数</td><td>1</td><td></td></tr>
            <tr><td class="idx">12</td><td>图元楼层归属</td><td>默认</td><td class="cb"><i class="chk"></i></td></tr>
            <tr><td class="idx">13</td><td>备注</td><td></td><td class="cb"><i class="chk"></i></td></tr>
            <tr><td class="idx">14</td><td><i class="pm">+</i>显示样式</td><td class="ro"></td><td></td></tr>
            <tr><td class="idx">17</td><td>分组属性</td><td class="ro gry">接线盒</td><td></td></tr>
            <tr><td class="idx">18</td><td><i class="pm">+</i>材料价格</td><td class="ro"></td><td></td></tr>
            <tr class="fillrow"><td class="idx"></td><td colspan="3"></td></tr>
          </tbody>
        </table>
        <div class="ptabs"><span class="ptab">图例</span><span class="ptab">实体模型</span></div>
      </section>
    </div>

    <div class="split"><span class="grip"></span></div>

    <div class="canvas">
      <svg class="scene" viewBox="467 166 1131 844" width="1131" height="844">
        <g fill="none" stroke="#a8a8a8" stroke-width="1">
          <ellipse cx="1032.5" cy="588.5" rx="406.5" ry="404.5"/>
          <circle cx="1031" cy="183" r="30"/>
          <circle cx="1032" cy="995" r="30"/>
          <circle cx="625" cy="588" r="30"/>
          <circle cx="1439" cy="588" r="30"/>
        </g>
        <g fill="none" stroke="#e0702c" stroke-width="1.2">
          <polygon points="802,540 1164,502 1235,694 873,732"/>
          <polyline points="1008,539 932,586 1105,648 1029,695"/>
        </g>
        <g fill="none" stroke="#6d6de6" stroke-width="1">
          <polygon points="1008,587 1049,592 1073,611 1065,634 1029,646 988,642 963,623 972,601"/>
        </g>
        <g stroke-linecap="butt" fill="none">
          <line x1="467" y1="384.5" x2="1570" y2="272.5" stroke="#1d5f60" stroke-width="14"/>
          <line x1="467" y1="384.5" x2="1570" y2="272.5" stroke="#2f9a96" stroke-width="11"/>
          <line x1="467" y1="384.5" x2="1570" y2="272.5" stroke="#45c0ba" stroke-width="7"/>
        </g>
        <rect x="1012" y="322" width="13" height="296" rx="3" fill="url(#gv)"/>
        <rect x="1027" y="322" width="13" height="296" rx="3" fill="url(#gv)"/>
        <polyline points="1012,518 1040,515" fill="none" stroke="#e0702c" stroke-opacity=".45"/>
        <g clip-path="url(#gridclip)" stroke="#7272ee" stroke-width="1" opacity=".95">
          <path d="M975 596l90 32M975 604l90 32M975 612l90 32M980 590l90 32M990 586l80 28M970 620l70 25M1000 582l70 25M965 628l70 25"/>
          <path d="M978 632l18-32M988 636l18-36M998 640l18-44M1008 642l18-46M1018 642l18-46M1028 642l18-44M1038 640l18-38M968 626l18-30M1048 636l12-22"/>
        </g>
        <polygon points="1010,596 1041,599 1058,613 1053,627 1032,637 1000,634 980,620 985,605" fill="none" stroke="#7272ee"/>
        <rect x="514" y="957" width="7" height="8" fill="#ccc"/>
        <path d="M517 957v-14" stroke="#0b2bff" stroke-width="3"/>
        <path d="M517 935l-4 9h8z" fill="#0b2bff"/>
        <circle cx="512" cy="951" r="3.5" fill="#12e812"/>
        <path d="M521 960l16-2" stroke="#ff1010" stroke-width="3"/>
        <path d="M545 957l-11-4v9z" fill="#ff1010"/>
        <text x="513" y="936" class="ax-z">Z</text>
        <text x="506" y="946" class="ax-y">Y</text>
        <text x="548" y="962" class="ax-x">X</text>
      </svg>
      <div class="viewbar">
        <svg class="vsph"><use href="#v-sph"/></svg>
        <svg class="v24"><use href="#v-2d"/></svg>
        <svg class="v24 m6"><use href="#v-wire"/></svg>
        <i class="car v-car"></i>
        <svg class="v24"><use href="#v-cube"/></svg>
        <i class="car v-car"></i>
        <svg class="v26"><use href="#v-rot"/></svg>
        <i class="car v-car"></i>
        <span class="vhr"></span>
        <svg class="v24"><use href="#v-tbl"/></svg>
      </div>
    </div>

    <div class="split"><span class="grip"></span></div>

    <div class="rightcol">
      <section class="panel draw">
        <div class="strip"><span class="x">✕</span></div>
        <div class="ptitle">图纸管理</div>
        <div class="ptools rt">
          <span class="ti r1"><svg class="ic"><use href="#r-add"/></svg>添加</span>
          <span class="ti r2 dis"><svg class="ic"><use href="#r-pos"/></svg>定位<i class="car"></i></span>
          <span class="ti r3 dis"><svg class="ic"><use href="#r-split"/></svg>手动分割<i class="car"></i></span>
          <span class="ti dis"><svg class="ic"><use href="#r-copy"/></svg>复制</span>
          <span class="more">▸▸</span>
        </div>
        <div class="psearch rs"><span>搜索图纸...</span><svg class="ic14"><use href="#m-search"/></svg></div>
        <div class="dbody">
          <table class="dtable">
            <colgroup><col class="w21"><col class="w111"><col class="w51"><col class="w71"><col class="w51"></colgroup>
            <thead><tr><th></th><th>图纸名称</th><th>比例</th><th>楼层</th><th>楼层编号</th></tr></thead>
            <tbody>
              <tr><td class="idx">1</td><td><i class="pm dp1">−</i>消防地下室电...</td><td></td><td></td><td></td></tr>
              <tr><td class="idx">2</td><td><i class="pm dp2">−</i>模型</td><td class="ctr">1:1</td><td class="ctr">首层</td><td></td></tr>
              <tr class="grn"><td class="idx">3</td><td><i class="lnk"></i>A区防空...</td><td class="ctr">1:1</td><td class="ctr">首层</td><td>1.1</td></tr>
            </tbody>
          </table>
          <div class="idxfill"></div>
        </div>
      </section>
      <section class="panel layers">
        <div class="strip"><span class="x">✕</span></div>
        <div class="ptitle">CAD图层</div>
        <div class="ptools lt">
          <span>显示指定图层</span><span>隐藏指定图层</span><span>显示指定图元</span>
          <span class="more">▸▸</span>
        </div>
        <div class="lbody">
          <table class="ltable">
            <colgroup><col class="w35"><col class="w36"><col class="w151"></colgroup>
            <thead><tr><th>开/关</th><th>颜色</th><th>名称</th></tr></thead>
            <tbody>
              <tr><td class="lc"><i class="chk part"></i></td><td class="lc"><i class="play"></i></td><td>已提取的CAD图层</td></tr>
              <tr><td class="lc"><i class="chk on"></i></td><td class="lc"><i class="play"></i></td><td>CAD原始图层</td></tr>
            </tbody>
          </table>
        </div>
      </section>
    </div>
  </main>

  <footer class="status">
    <span class="s s-coord">X = 101198.34 Y = 5052.72 Z = 60195.27</span>
    <span class="s s-h">层高 : 3</span>
    <span class="s s-b">底标高 : 0</span>
    <span class="s s-0">0</span>
    <span class="s s-hid">隐藏 : 0</span>
    <span class="sb b25"><svg class="ic"><path d="M3 2v12h10" fill="none" stroke="#444"/><path d="M6 8v3h3" fill="none" stroke="#444"/></svg></span>
    <span class="sb b36 act"><svg class="ic"><rect x="2.5" y="2.5" width="11" height="12" fill="#fff" stroke="#3a86d0"/><rect x="1" y="1" width="4" height="4" fill="#f07f22"/></svg><i class="car"></i></span>
    <span class="sb b36"><svg class="ic"><path d="M8 1l6 3v8l-6 3-6-3V4z" fill="none" stroke="#444"/><path d="M2 4l6 3 6-3M8 7v8" fill="none" stroke="#444"/></svg><i class="car"></i></span>
    <span class="sb b24"><svg class="ic"><path d="M2 1l12 14M14 1 2 15" stroke="#444"/></svg></span>
    <span class="sb b36"><svg class="ic"><path d="M2 13h12M2 13 11 3" fill="none" stroke="#333"/><path d="M8 9c1 1 1 2 1 4" fill="none" stroke="#333"/></svg><i class="car"></i></span>
    <span class="sb b36"><svg class="ic"><path d="M1 5h6M4 2v6" stroke="#333"/><rect x="6" y="9" width="9" height="4" fill="#333"/></svg><i class="car"></i></span>
    <span class="sb b73">跨类型选择</span>
    <span class="sb b61">折线选择</span>
    <span class="s s-cad">CAD图亮度 : 0%</span>
    <span class="sb b25z"><i class="round">−</i></span>
    <span class="slider"><i class="thumb"></i></span>
    <span class="sb b24z"><i class="round">+</i></span>
    <span class="s s-msg">按鼠标左键指定第一个角点 , 或拾取构件图元</span>
  </footer>

  <footer class="taskbar">
    <div class="orbwrap">
      <svg class="orb" viewBox="0 0 38 38"><circle cx="19" cy="19" r="18" fill="url(#orb)" stroke="#0b2f55"/><path d="M11 13l7-1v6h-7z" fill="#e5482d"/><path d="M19 12l8-2v7l-8 1z" fill="#7fc242"/><path d="M11 19h7v6l-7-1z" fill="#3c9ae0"/><path d="M19 19l8-1v8l-8-2z" fill="#f7c52e"/></svg>
    </div>
    <div class="tbtn">
      <svg class="ticon" viewBox="0 0 32 34"><path d="M16 2a15 15 0 1 0 0 30" fill="none" stroke="#1f9bf0" stroke-width="6"/><path d="M16 2a15 15 0 0 1 13 10" fill="none" stroke="#35b2f5" stroke-width="6"/><path d="M12 30a5 5 0 0 1 2-9 7 7 0 0 1 13 1 4 4 0 0 1 0 8z" fill="#fff"/></svg>
      <span>烟感 接线盒的搜...</span>
    </div>
    <div class="tbtn">
      <svg class="ticon fold" viewBox="0 0 24 34"><path d="M2 4l14-2 5 3v26H6z" fill="#f5d679"/><path d="M2 4v24l6 5V8z" fill="#e7bb52"/></svg>
      <span>消防</span>
    </div>
    <div class="tbtn">
      <svg class="ticon cad" viewBox="0 0 32 36"><rect x="1" y="1" width="30" height="34" rx="3" fill="#1666ba" stroke="#8a8a8a" stroke-width="2"/><text x="16" y="23" text-anchor="middle" font-size="13" font-family="Liberation Sans" fill="#fff">CAD</text></svg>
      <span>CAD快速看图 - C...</span>
    </div>
    <div class="tbtn on">
      <svg class="ticon apl"><use href="#logo"/></svg>
      <span>广联达BIM安装...</span>
    </div>
    <div class="tray">
      <svg class="tr" viewBox="0 0 16 16"><rect x="1" y="7" width="14" height="8" fill="#ccc"/><path d="M3 9h10M3 11h10M3 13h10" stroke="#777"/><path d="M9 7c0-3 2-2 4-5" fill="none" stroke="#ccc"/></svg>
      <svg class="tr" viewBox="0 0 16 16"><circle cx="8" cy="8" r="7" fill="#1846b0" stroke="#fff"/><text x="8" y="12" text-anchor="middle" font-size="11" font-weight="700" font-family="Liberation Sans" fill="#fff">?</text></svg>
      <svg class="tr" viewBox="0 0 16 16"><path d="M6 3h4v3H6zM5 4h4v3H5z" fill="none" stroke="#fff"/><path d="M6 13h4l-2 2z" fill="#fff"/></svg>
      <svg class="tr" viewBox="0 0 16 16"><rect x="2" y="0" width="12" height="16" fill="#bcdcf5" stroke="#3f8fd0"/><path d="M4 3h8v4H4zM4 9h8v4H4z" fill="#2f7cc9"/><path d="M10 11h4v4h-4z" fill="#7ac043"/></svg>
      <svg class="tr" viewBox="0 0 16 16"><rect x="3" y="1" width="5" height="10" fill="#fff"/><rect x="9" y="4" width="5" height="7" fill="none" stroke="#fff"/><path d="M8 11v4M5 15h6" stroke="#fff"/></svg>
      <svg class="tr" viewBox="0 0 16 16"><path d="M1 6h3l4-4v12l-4-4H1z" fill="#ddd"/><path d="M10 5c2 2 2 4 0 6M12 3c3 3 3 7 0 10" fill="none" stroke="#ddd"/></svg>
      <svg class="tr" viewBox="0 0 16 16"><path d="M3 1v15" stroke="#ddd"/><path d="M3 1h9l-2 3 2 3H3z" fill="#eee"/><circle cx="10" cy="11" r="4.5" fill="#d22"/><path d="M8 9l4 4M12 9l-4 4" stroke="#fff"/></svg>
      <svg class="tr" viewBox="0 0 16 16"><ellipse cx="8" cy="6" rx="4" ry="5" fill="#222"/><ellipse cx="8" cy="10" rx="5" ry="5" fill="#f5f5f5"/><path d="M5 7h6l-3 2z" fill="#f7b322"/><path d="M2 14h5l-2 2zM9 14h5l-2 2z" fill="#e8641c"/></svg>
    </div>
    <div class="clock"><span>8:40</span><span>2020/6/10</span></div>
    <div class="showdesk"></div>
  </footer>
</div>
</body>
</html>
```
FILE: styles.css
```css
* { box-sizing: border-box; }
html, body { margin: 0; padding: 0; }
body {
  width: 1920px; height: 1080px; overflow: hidden; background: #fff;
  font: 12px/18px "Noto Sans", "Noto Sans CJK SC", sans-serif; color: #222;
}
.defs { position: absolute; }
i { font-style: normal; display: inline-block; }
.app { width: 1920px; height: 1080px; display: flex; flex-direction: column; }
.ic { width: 16px; height: 16px; flex: none; display: block; }
.ic14 { width: 14px; height: 14px; flex: none; display: block; }
.car { width: 0; height: 0; border: 3.5px solid transparent; border-top: 4px solid #555; border-bottom: 0; margin-left: 6px; flex: none; }
.car-g { border-top-color: #777; margin: 0 0 0 -4px; }
.car-l { border-top-color: #bbb; }

/* title area */
.top { height: 42px; display: flex; border-bottom: 1px solid #d8d8d8; flex: none; }
.logo-col { width: 50px; padding: 8px 0 0 9px; flex: none; position: relative; }
.logo { width: 28px; height: 28px; display: block; }
.top-main { flex: 1; display: flex; flex-direction: column; }
.row-qat { height: 22px; display: flex; align-items: center; }
.qat { width: 680px; padding-left: 5px; display: flex; align-items: center; gap: 7px; }
.qmore { width: 5px; height: 6px; border-top: 1px solid #555; border-bottom: 3px solid #555; }
.wintitle { width: 960px; white-space: nowrap; color: #111; }
.winbtns { flex: 1; display: flex; align-items: center; justify-content: flex-end; gap: 25px; padding-right: 13px; margin-top: -4px; }
.wmin { width: 7px; height: 2px; background: #666; margin-top: 6px; }
.wres { width: 8px; height: 8px; border: 1px solid #555; box-shadow: 2px -2px 0 -1px #fff, 2px -2px 0 0 #555; }
.wclose { font-size: 10px; color: #555; line-height: 12px; width: 10px; }
.row-tabs { height: 19px; display: flex; }
.tabs { width: 1540px; display: flex; }
.tab { padding: 0 13px; line-height: 21px; color: #333; height: 19px; }
.tab.on { background: linear-gradient(#7fbdf0, #5aa5e6); color: #fff; border-radius: 2px 2px 0 0; }
.acct { flex: 1; display: flex; align-items: center; }
.topsearch { width: 150px; height: 17px; border: 1px solid #aaa; display: flex; align-items: center; justify-content: space-between; padding: 0 4px 0 2px; color: #777; }
.avatar { width: 16px; height: 17px; margin-left: 1px; flex: none; }
.aname { margin-left: 3px; width: 48px; color: #111; }
.tool16 { width: 14px; height: 14px; flex: none; }
.monk { margin-left: 9px; width: 16px; height: 16px; }
.qmark { color: #777; font-size: 15px; margin-left: 6px; line-height: 16px; }
.shirt { margin-left: 7px; }
.upl { margin-left: 8px; }

/* ribbon */
.ribbon { height: 97px; flex: none; display: flex; background: linear-gradient(#fff 0, #fff 45%, #e9ebed 100%); border-bottom: 2px solid #8f9296; }
.grp { border-right: 1px solid #d2d4d6; height: 93px; display: flex; flex-direction: column; flex: none; }
.g-sel { width: 142px; }
.g-comp { width: 189px; padding-left: 10px; }
.g-draw { width: 56px; }
.g-id { width: 181px; }
.g-chk { width: 312px; padding-left: 10px; }
.g-gen { width: 183px; padding-left: 10px; }
.g-sec { width: 108px; padding-left: 10px; }
.g-cad { width: 274px; padding-left: 10px; }
.gbody { height: 74px; display: flex; padding-top: 2px; flex: none; }
.gfoot { flex: 1; display: flex; align-items: center; justify-content: center; color: #333; padding-top: 3px; }
.g-gen .gfoot, .g-sec .gfoot, .g-cad .gfoot { margin-left: -10px; }
.g-comp .gfoot { margin-left: -8px; }
.g-chk .gfoot { margin-left: -6px; }
.col { display: grid; grid-auto-rows: 23px; align-content: start; }
.c89 { width: 89px; } .c85 { width: 85px; } .c84 { width: 84px; } .c111 { width: 111px; } .c109 { width: 109px; }
.ri { display: flex; align-items: center; white-space: nowrap; color: #333; }
.ri .ic { margin-right: 3px; }
.ri .car { margin-left: 7px; }
.ri .c1 { margin-left: 1px; }
.ri.dis { color: #aaa; }
.ri.hot { background: #c5d9f1; height: 19px; width: 70px; margin: 2px 0 0 -3px; padding-left: 3px; align-self: start; }
.large { width: 56px; display: flex; flex-direction: column; align-items: center; color: #333; padding: 4px 0 0 2px; }
.large.fill { width: 56px; padding-left: 0; padding-right: 1px; }
.large.w83 { width: 83px; padding: 4px 0 0; }
.large .sub { margin: 3px 0 0; }
.lg { width: 30px; height: 30px; margin-bottom: 4px; flex: none; }

/* combos */
.combos { height: 27px; flex: none; background: #c9ccd1; border-bottom: 1px solid #9a9da0; padding: 2px 3px 0; display: flex; gap: 6px; }
.combo { width: 99px; height: 22px; background: #fff; border: 1px solid #bdbfc2; display: flex; align-items: center; justify-content: space-between; padding: 2px 5px 0 3px; color: #333; }

/* main */
.main { height: 844px; flex: none; display: flex; background: #fff; }
.panel { background: #eee; display: flex; flex-direction: column; }
.strip { height: 11px; flex: none; background: #d4d6da; display: flex; justify-content: flex-end; align-items: center; padding-right: 3px; }
.x { font-size: 8px; line-height: 10px; color: #777; font-weight: 700; }
.ptitle { height: 22px; flex: none; line-height: 22px; padding-left: 8px; color: #7d7d7d; font-weight: 500; border-top: 1px solid #c4c6c8; border-bottom: 1px solid #c8cacc; }
.ptools { height: 28px; flex: none; display: flex; align-items: center; border-bottom: 1px solid #c8cacc; color: #333; padding-top: 2px; }
.ti { display: flex; align-items: center; white-space: nowrap; }
.ti .ic { margin-right: 4px; }
.ti .car { margin-left: 6px; }
.ti.dis { color: #aaa; }
.gtgt { font-size: 11px; margin-left: 2px; }
.nav { width: 180px; flex: none; margin-right: 4px; border-right: 1px solid #c4c6c8; border-left: 1px solid #d0d0d0; }
.navtools { padding-left: 6px; gap: 8px; }
.navtree { flex: 1; background: #fff; padding-top: 4px; }
.nrow { height: 24px; display: flex; align-items: center; padding-left: 3px; gap: 4px; color: #222; white-space: nowrap; }
.nrow.ch { padding-left: 43px; gap: 6px; }
.nrow.sel { margin: 1px 0 2px 40px; padding-left: 3px; width: 113px; height: 21px; background: #c5d7ef; }

.midcol { width: 279px; flex: none; display: flex; flex-direction: column; gap: 4px; }
.clist { height: 409px; flex: none; border-left: 1px solid #c4c6c8; border-right: 1px solid #c4c6c8; }
.mt { padding-left: 5px; }
.t1 { width: 63px; } .t2 { width: 52px; } .t3 { width: 51px; } .t4 { width: 63px; }
.psearch { background: #fff; display: flex; align-items: center; justify-content: space-between; color: #999; flex: none; padding-top: 1px; }
.ms { height: 20px; padding: 1px 6px 0 2px; border-bottom: 1px solid #c8cacc; }
.ctree { flex: 1; background: #fff; padding-top: 3px; border-bottom: 1px solid #c4c6c8; }
.crow { height: 24px; display: flex; align-items: center; white-space: nowrap; }
.l1 { padding-left: 10px; } .l2 { padding-left: 30px; } .l3 { padding-left: 60px; }
.tri { width: 0; height: 0; border-left: 6px solid transparent; border-bottom: 6px solid #444; margin-right: 7px; }
.csel { background: #b5cdec; height: 21px; line-height: 20px; width: 130px; padding-left: 3px; display: block; color: #111; }

.props { flex: 1; min-height: 0; border-left: 1px solid #c4c6c8; border-right: 1px solid #c4c6c8; }
table { border-collapse: collapse; table-layout: fixed; }
.ptable { width: 276px; background: #fff; flex: none; }
.w22 { width: 21px; } .w115 { width: 115px; } .w98 { width: 98px; } .w41 { width: 41px; }
.w21 { width: 21px; } .w111 { width: 111px; } .w51 { width: 51px; } .w71 { width: 71px; }
.w35 { width: 35px; } .w36 { width: 36px; } .w151 { width: 151px; }
th { height: 21px; padding: 0; background: #f0f0f0; border: 1px solid #cbcbcb; font-weight: 400; color: #444; white-space: nowrap; }
td { height: 21px; padding: 0 0 0 3px; border: 1px solid #cbcbcb; white-space: nowrap; overflow: hidden; color: #222; line-height: 19px; }
td.idx { background: #f0f0f0; text-align: center; padding: 0; color: #444; }
td.blu { color: #3a6fe0; }
td.ro { background: #ebebeb; }
td.gry { color: #9a9a9a; }
td.cb { text-align: center; padding: 0; }
td.ctr { text-align: center; padding: 0; }
.chk { width: 13px; height: 13px; border: 1px solid #7f7f7f; border-radius: 2px; background: #fff; vertical-align: middle; margin-top: -2px; position: relative; }
.chk.on { background: #5aa0f5; border-color: #5aa0f5; }
.chk.on::after { content: ""; position: absolute; left: 3px; top: 1px; width: 4px; height: 7px; border: solid #fff; border-width: 0 2px 2px 0; transform: rotate(45deg); }
.chk.part { background: #8fbdf7; box-shadow: 0 0 0 1px #fff inset; }
.pm { width: 11px; height: 11px; border: 1px solid #666; border-radius: 2px; background: #fff; text-align: center; line-height: 8px; font-size: 10px; margin-right: 7px; vertical-align: middle; margin-top: -2px; color: #333; }
.fillrow td { height: 13px; border: 0; }
.fillrow td.idx { border-right: 0; }
.ptabs { flex: none; margin-top: auto; height: 28px; display: flex; gap: 7px; border-top: 1px solid #c4c6c8; }
.ptab { width: 79px; height: 27px; background: #fff; border: 1px solid #cfcfcf; border-top: 0; border-radius: 0 0 4px 4px; text-align: center; line-height: 28px; color: #222; }

.split { width: 4px; flex: none; background: #fff; padding-top: 374px; }
.grip { display: block; width: 4px; height: 98px; background: #6a6f75; }

.canvas { width: 1131px; flex: none; background: #000; position: relative; overflow: hidden; }
.scene { display: block; }
.ax-z { font: 14px "Liberation Sans", sans-serif; fill: #0b2bff; }
.ax-y { font: 13px "Liberation Sans", sans-serif; fill: #12e812; }
.ax-x { font: 14px "Liberation Sans", sans-serif; fill: #ff1010; }
.viewbar { position: absolute; right: 0; top: 0; width: 33px; height: 226px; background: #96999e; border-radius: 0 0 3px 3px; display: flex; flex-direction: column; align-items: center; padding-top: 10px; }
.vsph { width: 24px; height: 24px; margin-bottom: 6px; }
.v24 { width: 24px; height: 24px; flex: none; }
.v26 { width: 26px; height: 26px; flex: none; margin-top: 4px; }
.m6 { margin-top: 5px; }
.v-car { margin: 5px 0 4px; border-top-color: #3d4a5e; }
.vhr { width: 24px; height: 1px; background: #5d6670; margin: 2px 0 5px; flex: none; }

.rightcol { width: 318px; flex: none; display: flex; flex-direction: column; gap: 5px; }
.draw { height: 431px; flex: none; border-left: 1px solid #c4c6c8; }
.rt { padding-left: 7px; padding-top: 3px; position: relative; }
.r1 { width: 51px; } .r2 { width: 62px; } .r3 { width: 87px; }
.more { position: absolute; right: 1px; color: #bbb; font-size: 9px; letter-spacing: -1px; line-height: 14px; }
.rs { height: 24px; margin: 0 1px; padding: 1px 5px 0 3px; border: 1px solid #c8cacc; }
.dbody { flex: 1; background: #fff; margin-top: 2px; padding-left: 1px; display: flex; flex-direction: column; }
.dtable { width: 305px; flex: none; }
.dtable .dp1 { margin-right: 7px; }
.dtable .dp2 { margin-left: 10px; margin-right: 7px; }
.grn td { background: #008000; color: #000; }
.grn td.idx { background: #f0f0f0; color: #444; }
.lnk { width: 17px; height: 10px; border: solid #fff; border-width: 0 0 1px 1px; margin: -8px 2px 0 18px; vertical-align: middle; }
.idxfill { flex: 1; width: 21px; background: #f0f0f0; }
.layers { flex: 1; min-height: 0; border-left: 1px solid #c4c6c8; position: relative; }
.layers .ptitle { line-height: 20px; }
.lt { padding-left: 5px; gap: 8px; position: relative; height: 27px; }
.lbody { flex: 1; padding-top: 6px; background: linear-gradient(#fff 6px, #f0f0f0 6px, #f0f0f0 27px, #fff 27px); }
.lbody table { width: 222px; }
.ltable td { height: 26px; padding-left: 3px; }
.ltable td.lc { text-align: center; padding: 0; }
.play { width: 7px; height: 9px; border: 1px solid #bbb; border-left-width: 2px; border-radius: 0 5px 5px 0; background: #fff; margin-top: -6px; }

/* status */
.status { height: 29px; flex: none; background: #dcdde0; border-bottom: 1px solid #fff; display: flex; align-items: center; white-space: nowrap; color: #333; padding-top: 2px; }
.s { flex: none; padding-top: 1px; }
.s-coord { width: 265px; padding-left: 2px; letter-spacing: .45px; }
.s-h { width: 83px; word-spacing: 1px; } .s-b { width: 104px; word-spacing: 1px; } .s-0 { width: 102px; } .s-hid { width: 103px; word-spacing: 1px; }
.s-cad { width: 113px; margin-left: 6px; }
.sb { height: 25px; flex: none; margin-right: 3px; background: #c9cbce; border: 1px solid #a2a4a7; display: flex; align-items: center; justify-content: center; color: #333; }
.sb .car { margin-left: 3px; }
.b25 { width: 25px; } .b36 { width: 36px; } .b24 { width: 24px; margin-left: 1px; } .b73 { width: 73px; } .b61 { width: 61px; margin-right: 0; }
.act { background: #fff; border-color: #4a95dc; }
.b25z { width: 25px; margin: 0; } .b24z { width: 24px; margin: 0; }
.round { width: 15px; height: 15px; border-radius: 50%; background: #fff; border: 1px solid #777; text-align: center; line-height: 12px; font-size: 12px; font-weight: 700; color: #333; }
.slider { width: 46px; height: 3px; background: #cfd0d2; position: relative; flex: none; }
.thumb { position: absolute; left: 0; top: -8px; width: 9px; height: 18px; background: #fff; border: 1px solid #777; border-radius: 3px; }
.s-msg { color: #222; }

/* taskbar */
.taskbar { height: 40px; flex: none; display: flex; align-items: center; background: linear-gradient(90deg, #2b5a68 0, #1e4d5c 35%, #2a5a68 62%, #1b4a59 85%, #1b4a59 100%); border-top: 1px solid #14333e; color: #fff; }
.orbwrap { width: 60px; flex: none; padding-left: 9px; }
.orb { width: 38px; height: 38px; display: block; }
.tbtn { width: 158px; height: 38px; flex: none; margin-right: 4px; border: 1px solid rgba(255,255,255,.35); border-radius: 2px; background: linear-gradient(#507a86, #2b5562 50%, #1f4957); display: flex; align-items: center; padding-left: 9px; color: #fff; white-space: nowrap; gap: 4px; }
.ticon { width: 31px; height: 34px; flex: none; }
.fold { width: 24px; margin-right: 6px; }
.cad { width: 32px; margin-right: 1px; }
.ticon.apl { width: 32px; height: 32px; }
.tbtn.on { background: linear-gradient(#93aab2, #6a8a95 50%, #517784); }
.tray { margin-left: auto; display: flex; gap: 7px; flex: none; align-items: center; }
.tr { width: 16px; height: 16px; flex: none; }
.clock { width: 60px; margin-left: 17px; display: flex; flex-direction: column; align-items: center; color: #fff; line-height: 17px; flex: none; }
.showdesk { width: 14px; height: 38px; margin-left: 8px; border: 1px solid rgba(255,255,255,.4); background: linear-gradient(#5d818c, #2a5562); flex: none; }
```
